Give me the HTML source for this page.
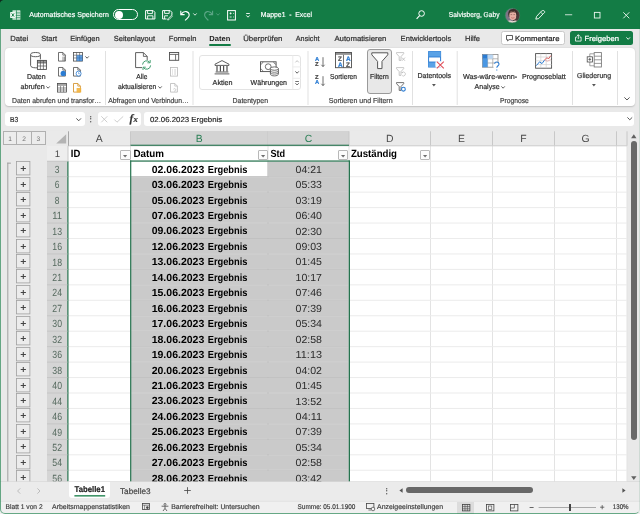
<!DOCTYPE html>
<html lang="de"><head><meta charset="utf-8"><title>Mappe1 - Excel</title>
<style>
html,body{margin:0;padding:0;}
body{width:640px;height:514px;overflow:hidden;background:#e9e9e9;font-family:"Liberation Sans",sans-serif;position:relative;}
#w{position:absolute;left:0;top:0;width:640px;height:514px;overflow:hidden;will-change:transform;}
#w div,#w span,#w svg{position:absolute;box-sizing:border-box;}
#w svg{overflow:visible;}
.x{left:0;top:0;}
.x text{white-space:pre;text-rendering:geometricPrecision;font-family:"Liberation Sans",sans-serif;}
</style></head><body><div id="w">
<div style="left:0px;top:0px;width:640px;height:28.6px;background:#137c45;"></div>
<svg style="left:0px;top:28px" width="640" height="2"><rect x="0.00" y="0.60" width="640" height="0.8" fill="#137c45" opacity=".5"/></svg>
<svg style="left:0px;top:0px;" width="4" height="3" viewBox="0 0 4 3"><path d="M0 0H3.2Q0.6 0.4 0 2.8Z" fill="#10281c"/></svg>
<svg style="left:9.6px;top:9.9px;" width="10.6" height="10" viewBox="0 0 10.6 10"><rect x="2.4" y="0.2" width="8" height="9.6" rx="0.6" fill="#cde7d7"/>
<path d="M2.4 2.9H10.4M2.4 5.4H10.4M2.4 7.7H10.4M6.5 0.2V9.8" stroke="#1d8550" stroke-width="0.7" fill="none"/>
<rect x="0.1" y="2" width="5.6" height="6" rx="0.5" fill="#eaf6ef"/>
<path d="M1.7 3.4L4.1 6.6M4.1 3.4L1.7 6.6" stroke="#137c45" stroke-width="0.95" fill="none"/></svg>
<svg class="x" width="1" height="1"><text x="29.30" y="17.20" font-size="7.2" fill="#fff" stroke="#fff" stroke-width="0.18" textLength="79.50" lengthAdjust="spacingAndGlyphs">Automatisches Speichern</text></svg>
<div style="left:113.2px;top:8.9px;width:25px;height:11.6px;border:1.1px solid #fff;border-radius:6px;"></div>
<div style="left:115.1px;top:10.6px;width:8.2px;height:8.2px;background:#fff;border-radius:50%;"></div>
<svg style="left:145px;top:10px;" width="10.5" height="9.6" viewBox="0 0 10.5 9.6"><path d="M0.6 0.6H8.2L9.9 2.3V9H0.6Z" fill="none" stroke="#fff" stroke-width="1"/>
<path d="M2.6 0.8V3.6H7.4V0.8M2.6 9V5.8H7.9V9" fill="none" stroke="#fff" stroke-width="0.9"/></svg>
<svg style="left:162.4px;top:10px;" width="10.8" height="9.8" viewBox="0 0 10.8 9.8"><path d="M0.6 0.6H8.2L9.9 2.3V5M4.6 9H0.6V0.6" fill="none" stroke="#fff" stroke-width="1"/>
<path d="M2.6 0.8V3.4H7.2V0.8M2.6 9V5.8H6" fill="none" stroke="#fff" stroke-width="0.9"/>
<path d="M9.6 5.2L6 8.8L5.6 10L6.9 9.7L10.4 6.1Z" fill="none" stroke="#fff" stroke-width="0.8"/></svg>
<svg style="left:180px;top:9.5px;" width="10" height="11" viewBox="0 0 10 11"><path d="M0.8 0.8V4.6H4.6" fill="none" stroke="#fff" stroke-width="1.1"/>
<path d="M1 4.4C2.4 2.2 4.4 1.4 6.2 1.6C8.2 1.9 9.2 3.4 9.2 5C9.2 7 7.4 8.4 5 10.4" fill="none" stroke="#fff" stroke-width="1.1"/></svg>
<svg style="left:192.6px;top:13px;" width="4" height="3" viewBox="0 0 4 3"><path d="M0.3 0.4L2 2.2L3.7 0.4" fill="none" stroke="#fff" stroke-width="0.8"/></svg>
<svg style="left:203.8px;top:9.5px;" width="9.4" height="11" viewBox="0 0 9.4 11"><path d="M8.6 0.8V4.6H4.8" fill="none" stroke="#5aa585" stroke-width="1.1"/>
<path d="M8.4 4.4C7 2.2 5 1.4 3.2 1.6C1.4 1.9 0.6 3.4 0.6 5C0.6 7 2.2 8.4 4.4 10.4" fill="none" stroke="#5aa585" stroke-width="1.1"/></svg>
<svg style="left:215.8px;top:13px;" width="4" height="3" viewBox="0 0 4 3"><path d="M0.3 0.4L2 2.2L3.7 0.4" fill="none" stroke="#5aa585" stroke-width="0.8"/></svg>
<svg style="left:227px;top:9.5px;" width="9" height="10.6" viewBox="0 0 9 10.6"><rect x="0.6" y="0.6" width="7.8" height="9.4" fill="none" stroke="#fff" stroke-width="1"/>
<path d="M2.6 3.4H4.6M3.6 2.4V4.4M2.6 7H4.6M6 3.4H6.8M6 7H6.8" stroke="#fff" stroke-width="0.8" fill="none"/></svg>
<svg style="left:246.2px;top:12.8px;" width="4" height="5" viewBox="0 0 4 5"><path d="M0.2 0.5H3.8" stroke="#fff" stroke-width="0.9"/><path d="M0.3 2.4L2 4.2L3.7 2.4" fill="none" stroke="#fff" stroke-width="0.9"/></svg>
<svg class="x" width="1" height="1"><text x="260.80" y="17.20" font-size="7.2" fill="#fff" stroke="#fff" stroke-width="0.18" textLength="51.20" lengthAdjust="spacingAndGlyphs">Mappe1 &nbsp;-&nbsp; Excel</text></svg>
<svg style="left:416.2px;top:10.4px;" width="9" height="9.4" viewBox="0 0 9 9.4"><circle cx="5.6" cy="3.5" r="2.8" fill="none" stroke="#fff" stroke-width="1"/><path d="M3.6 5.6L0.6 8.8" stroke="#fff" stroke-width="1.1"/></svg>
<svg class="x" width="1" height="1"><text x="448.80" y="17.20" font-size="7.2" fill="#fff" stroke="#fff" stroke-width="0.18" textLength="50.70" lengthAdjust="spacingAndGlyphs">Salvisberg, Gaby</text></svg>
<svg style="left:505px;top:7.5px;" width="15" height="15" viewBox="0 0 15 15"><defs><clipPath id="av"><circle cx="7.5" cy="7.5" r="7.3"/></clipPath></defs>
<g clip-path="url(#av)"><rect width="15" height="15" fill="#7d7486"/>
<rect x="8" y="0" width="7" height="15" fill="#4a3a3a"/>
<path d="M3.2 6C3.2 2.6 5.2 1 7.8 1C10.6 1 12.6 2.8 12.4 6.4L11.8 9L3.8 9Z" fill="#3b2c2a"/>
<ellipse cx="7.8" cy="7.6" rx="3.5" ry="4.6" fill="#e6aea4"/>
<path d="M4.6 5.2C5.4 3.4 6.6 3 7.8 3C9.2 3 10.4 3.4 11 5.2C10 4.4 9 4.2 7.8 4.2C6.6 4.2 5.6 4.4 4.6 5.2Z" fill="#5a4038"/>
<path d="M1 15C2 12.4 4.6 12 7.6 13.2C10.6 12 13 12.4 14 15Z" fill="#eadbd4"/>
<path d="M6.2 9.6Q7.8 10.8 9.4 9.6" stroke="#b8605c" stroke-width="0.7" fill="none"/>
<path d="M5.6 6.6H7.2M8.4 6.6H10" stroke="#7a5048" stroke-width="0.6"/></g>
<circle cx="7.5" cy="7.5" r="7.3" fill="none" stroke="#2f8f5f" stroke-width="0.5"/></svg>
<svg style="left:535.4px;top:10px;" width="10.4" height="9.8" viewBox="0 0 10.4 9.8"><path d="M6.4 1.2C7.6 0.2 9.2 0.4 9.6 1.4C10 2.4 9.2 3.2 8.4 3.6L3.6 8.6L0.8 9.2L1.6 6.4Z" fill="none" stroke="#fff" stroke-width="0.9"/>
<path d="M5.6 2.2L8 4.4" stroke="#fff" stroke-width="0.8"/></svg>
<svg style="left:565px;top:14px" width="8" height="2"><rect x="0.00" y="0.40" width="7.2" height="0.8" fill="#eef6f1"/></svg>
<svg style="left:593.8px;top:11.8px;" width="6.4" height="6.4" viewBox="0 0 6.4 6.4"><rect x="0.4" y="0.4" width="5.6" height="5.6" fill="none" stroke="#e3f2ea" stroke-width="0.95"/></svg>
<svg style="left:622.6px;top:11.8px;" width="6.6" height="6.6" viewBox="0 0 6.6 6.6"><path d="M0.3 0.3L6.3 6.3M6.3 0.3L0.3 6.3" stroke="#e3f2ea" stroke-width="0.95"/></svg>
<div style="left:0px;top:29.4px;width:640px;height:18.4px;background:#e9e9e9;"></div>
<svg class="x" width="1" height="1"><text x="10.30" y="41.00" font-size="7.4" fill="#333" stroke="#333" stroke-width="0.22" textLength="17.90" lengthAdjust="spacingAndGlyphs">Datei</text></svg>
<svg class="x" width="1" height="1"><text x="41.20" y="41.00" font-size="7.4" fill="#333" stroke="#333" stroke-width="0.22" textLength="15.80" lengthAdjust="spacingAndGlyphs">Start</text></svg>
<svg class="x" width="1" height="1"><text x="70.20" y="41.00" font-size="7.4" fill="#333" stroke="#333" stroke-width="0.22" textLength="29.40" lengthAdjust="spacingAndGlyphs">Einfügen</text></svg>
<svg class="x" width="1" height="1"><text x="113.80" y="41.00" font-size="7.4" fill="#333" stroke="#333" stroke-width="0.22" textLength="41.20" lengthAdjust="spacingAndGlyphs">Seitenlayout</text></svg>
<svg class="x" width="1" height="1"><text x="168.80" y="41.00" font-size="7.4" fill="#333" stroke="#333" stroke-width="0.22" textLength="27.60" lengthAdjust="spacingAndGlyphs">Formeln</text></svg>
<svg class="x" width="1" height="1"><text x="243.20" y="41.00" font-size="7.4" fill="#333" stroke="#333" stroke-width="0.22" textLength="39.20" lengthAdjust="spacingAndGlyphs">Überprüfen</text></svg>
<svg class="x" width="1" height="1"><text x="295.80" y="41.00" font-size="7.4" fill="#333" stroke="#333" stroke-width="0.22" textLength="23.70" lengthAdjust="spacingAndGlyphs">Ansicht</text></svg>
<svg class="x" width="1" height="1"><text x="334.40" y="41.00" font-size="7.4" fill="#333" stroke="#333" stroke-width="0.22" textLength="51.90" lengthAdjust="spacingAndGlyphs">Automatisieren</text></svg>
<svg class="x" width="1" height="1"><text x="400.60" y="41.00" font-size="7.4" fill="#333" stroke="#333" stroke-width="0.22" textLength="50.70" lengthAdjust="spacingAndGlyphs">Entwicklertools</text></svg>
<svg class="x" width="1" height="1"><text x="465.00" y="41.00" font-size="7.4" fill="#333" stroke="#333" stroke-width="0.22" textLength="15.00" lengthAdjust="spacingAndGlyphs">Hilfe</text></svg>
<svg class="x" width="1" height="1"><text x="209.30" y="41.00" font-size="7.4" fill="#1c1c1c" font-weight="700" textLength="21.00" lengthAdjust="spacingAndGlyphs">Daten</text></svg>
<div style="left:209px;top:44.2px;width:21.8px;height:1.7px;background:#137c45;border-radius:1px;"></div>
<div style="left:500.5px;top:31.2px;width:64.6px;height:13.9px;background:#fff;border:1px solid #c9c9c9;border-radius:2.5px;"></div>
<svg style="left:505.8px;top:35px;" width="7" height="6.6" viewBox="0 0 7 6.6"><path d="M0.5 0.5H6.5V4.6H3L1.6 6V4.6H0.5Z" fill="none" stroke="#333" stroke-width="0.8"/></svg>
<svg class="x" width="1" height="1"><text x="515.00" y="41.10" font-size="7.4" fill="#262626" stroke="#262626" stroke-width="0.22" textLength="44.50" lengthAdjust="spacingAndGlyphs">Kommentare</text></svg>
<div style="left:570px;top:31.2px;width:63.2px;height:13.9px;background:#137c45;border-radius:2.5px;"></div>
<svg style="left:575px;top:34.2px;" width="6.6" height="7.6" viewBox="0 0 6.6 7.6"><path d="M1.8 3.2H0.5V7.1H6.1V3.2H4.8" fill="none" stroke="#fff" stroke-width="0.8"/><path d="M3.3 5V0.8M1.7 2.3L3.3 0.7L4.9 2.3" fill="none" stroke="#fff" stroke-width="0.8"/></svg>
<svg class="x" width="1" height="1"><text x="584.60" y="41.10" font-size="7.4" fill="#fff" stroke="#fff" stroke-width="0.22" textLength="34.40" lengthAdjust="spacingAndGlyphs">Freigeben</text></svg>
<svg style="left:625.6px;top:36.8px;" width="4.4" height="3" viewBox="0 0 4.4 3"><path d="M0.4 0.4L2.2 2.3L4 0.4" fill="none" stroke="#fff" stroke-width="0.9"/></svg>
<div style="left:4.6px;top:47.8px;width:630.6px;height:58.4px;background:#fff;border-radius:4px;box-shadow:0 0.5px 1.5px rgba(0,0,0,.18);"></div>
<svg style="left:29.5px;top:52.4px;" width="17" height="18" viewBox="0 0 17 18"><path d="M0.6 2.6V13.6C0.6 15 3 15.8 5.4 15.8H7.2M10.4 2.6V7.4" fill="none" stroke="#4d4d4d" stroke-width="0.9"/>
<ellipse cx="5.5" cy="2.6" rx="4.9" ry="2.1" fill="#fff" stroke="#4d4d4d" stroke-width="0.9"/>
<rect x="7.4" y="8.4" width="9" height="9" fill="#fff" stroke="#4d4d4d" stroke-width="0.9"/>
<rect x="7.4" y="8.4" width="9" height="2.6" fill="#4d4d4d" opacity=".55"/>
<path d="M7.4 11H16.4M7.4 14H16.4M10.4 8.4V17.4M13.4 8.4V17.4" stroke="#4d4d4d" stroke-width="0.7" fill="none"/></svg>
<svg class="x" width="1" height="1"><text x="27.00" y="79.20" font-size="7.2" fill="#2e2e2e" stroke="#2e2e2e" stroke-width="0.2" textLength="18.60" lengthAdjust="spacingAndGlyphs">Daten</text></svg>
<svg class="x" width="1" height="1"><text x="20.50" y="88.90" font-size="7.2" fill="#2e2e2e" stroke="#2e2e2e" stroke-width="0.2" textLength="24.10" lengthAdjust="spacingAndGlyphs">abrufen</text></svg>
<svg style="left:46.2px;top:85.6px;" width="4.2" height="3" viewBox="0 0 4.2 3"><path d="M0.4 0.4L2.1 2.2L3.8 0.4" fill="none" stroke="#444" stroke-width="0.85"/></svg>
<svg style="left:58px;top:52.4px;" width="8" height="9.6" viewBox="0 0 8 9.6"><path d="M0.5 0.5H4.8L7.4 3.1V9.1H0.5Z" fill="#fff" stroke="#4d4d4d" stroke-width="0.8"/><path d="M4.8 0.5V3.1H7.4" fill="none" stroke="#4d4d4d" stroke-width="0.7"/><path d="M5 4.6V9M6.4 4.6V9" stroke="#4d4d4d" stroke-width="0.6"/></svg>
<svg style="left:58px;top:67.4px;" width="8" height="9.6" viewBox="0 0 8 9.6"><path d="M0.5 0.5H4.8L7.4 3.1V9.1H0.5Z" fill="#fff" stroke="#4d4d4d" stroke-width="0.8"/><path d="M4.8 0.5V3.1H7.4" fill="none" stroke="#4d4d4d" stroke-width="0.7"/><circle cx="5.2" cy="6.4" r="2.6" fill="#2b7cd3"/></svg>
<svg style="left:57.2px;top:82.8px;" width="10" height="9.6" viewBox="0 0 10 9.6"><rect x="0.5" y="0.5" width="9" height="8.6" fill="#fff" stroke="#4d4d4d" stroke-width="0.8"/><rect x="0.5" y="0.5" width="9" height="2.4" fill="#4d4d4d" opacity=".5"/><path d="M0.5 5H9.5M0.5 7H9.5M3.6 2.9V9.1M6.6 2.9V9.1" stroke="#4d4d4d" stroke-width="0.6"/></svg>
<svg style="left:72.6px;top:52.4px;" width="10" height="9.6" viewBox="0 0 10 9.6"><rect x="0.5" y="0.5" width="9" height="8.6" fill="#fff" stroke="#4d4d4d" stroke-width="0.8"/><path d="M0.5 3.2H9.5M0.5 6H9.5M3.6 0.5V9.1M6.6 0.5V9.1" stroke="#4d4d4d" stroke-width="0.6"/><rect x="3.6" y="3.2" width="5.9" height="5.9" fill="#2b7cd3" opacity=".75"/></svg>
<svg style="left:85px;top:55.6px;" width="4.2" height="3" viewBox="0 0 4.2 3"><path d="M0.4 0.4L2.1 2.2L3.8 0.4" fill="none" stroke="#444" stroke-width="0.85"/></svg>
<svg style="left:73.4px;top:67.4px;" width="8" height="9.6" viewBox="0 0 8 9.6"><path d="M0.5 0.5H4.8L7.4 3.1V9.1H0.5Z" fill="#fff" stroke="#4d4d4d" stroke-width="0.8"/><path d="M4.8 0.5V3.1H7.4" fill="none" stroke="#4d4d4d" stroke-width="0.7"/><circle cx="5.6" cy="6.6" r="2.5" fill="#fff" stroke="#2b7cd3" stroke-width="0.8"/><path d="M5.6 5.2V6.7H6.8" stroke="#2b7cd3" stroke-width="0.6" fill="none"/></svg>
<svg style="left:73.4px;top:82.8px;" width="8" height="9.6" viewBox="0 0 8 9.6"><path d="M0.5 0.5H4.8L7.4 3.1V9.1H0.5Z" fill="#fff" stroke="#d08a1a" stroke-width="0.8"/><path d="M4.8 0.5V3.1H7.4" fill="none" stroke="#d08a1a" stroke-width="0.7"/><rect x="3.6" y="5" width="4.6" height="4.4" fill="#f3b23c" opacity=".9"/></svg>
<svg class="x" width="1" height="1"><text x="12.00" y="102.60" font-size="7.2" fill="#444" stroke="#444" stroke-width="0.2" textLength="89.20" lengthAdjust="spacingAndGlyphs">Daten abrufen und transfor…</text></svg>
<svg style="left:105px;top:51px" width="1" height="54"><rect x="0.00" y="0.00" width="1" height="54" fill="#e1e1e1"/></svg>
<svg style="left:135px;top:52px;" width="16.5" height="18.4" viewBox="0 0 16.5 18.4"><path d="M0.6 0.6H8.4L12.2 4.4V8M7 15.6H0.6V0.6" fill="#fff" stroke="#4d4d4d" stroke-width="0.9"/><path d="M8.4 0.6V4.4H12.2" fill="none" stroke="#4d4d4d" stroke-width="0.8"/>
<path d="M7.6 12.6A4 4 0 0 1 14.8 10.4M15.6 13.4A4 4 0 0 1 8.4 15.6" fill="none" stroke="#3a9a6a" stroke-width="1"/>
<path d="M15.2 8V10.8H12.4M8 18V15.2H10.8" fill="none" stroke="#3a9a6a" stroke-width="0.9"/></svg>
<svg class="x" width="1" height="1"><text x="136.30" y="79.20" font-size="7.2" fill="#2e2e2e" stroke="#2e2e2e" stroke-width="0.2" textLength="11.10" lengthAdjust="spacingAndGlyphs">Alle</text></svg>
<svg class="x" width="1" height="1"><text x="118.00" y="88.90" font-size="7.2" fill="#2e2e2e" stroke="#2e2e2e" stroke-width="0.2" textLength="38.20" lengthAdjust="spacingAndGlyphs">aktualisieren</text></svg>
<svg style="left:158px;top:85.6px;" width="4.2" height="3" viewBox="0 0 4.2 3"><path d="M0.4 0.4L2.1 2.2L3.8 0.4" fill="none" stroke="#444" stroke-width="0.85"/></svg>
<svg style="left:168.8px;top:52px;" width="10.2" height="8.8" viewBox="0 0 10.2 8.8"><rect x="0.5" y="0.5" width="9.2" height="7.8" fill="#fff" stroke="#4d4d4d" stroke-width="0.9"/><path d="M0.5 2.4H9.7M6.6 2.4V8.3" stroke="#4d4d4d" stroke-width="0.8"/></svg>
<svg style="left:170px;top:67.4px;" width="8" height="9.6" viewBox="0 0 8 9.6"><rect x="0.5" y="0.5" width="7" height="8.6" fill="#fff" stroke="#b9b9b9" stroke-width="0.8"/><path d="M2 3H3M2 5H3M2 7H3M4.2 3H6M4.2 5H6M4.2 7H6" stroke="#b9b9b9" stroke-width="0.7"/></svg>
<svg style="left:170.4px;top:82.8px;" width="8" height="9.6" viewBox="0 0 8 9.6"><path d="M0.5 0.5H4.8L7.4 3.1V9.1H0.5Z" fill="#fff" stroke="#b9b9b9" stroke-width="0.8"/><path d="M4.8 0.5V3.1H7.4" fill="none" stroke="#b9b9b9" stroke-width="0.7"/><path d="M3.4 6.2C4.4 5.2 5.6 5.6 5.8 6.6C6 7.6 5 8.4 4 8" stroke="#b9b9b9" stroke-width="0.7" fill="none"/></svg>
<svg class="x" width="1" height="1"><text x="108.20" y="102.60" font-size="7.2" fill="#444" stroke="#444" stroke-width="0.2" textLength="80.60" lengthAdjust="spacingAndGlyphs">Abfragen und Verbindun…</text></svg>
<svg style="left:192px;top:51px" width="2" height="54"><rect x="0.50" y="0.00" width="1" height="54" fill="#e1e1e1"/></svg>
<div style="left:198.8px;top:55px;width:102.6px;height:34.6px;background:#fff;border:1px solid #e3e3e3;border-radius:3px;"></div>
<svg style="left:292px;top:55px" width="2" height="35"><rect x="0.30" y="0.50" width="1" height="33.6" fill="#ececec"/></svg>
<svg style="left:292px;top:66px" width="9" height="2"><rect x="0.30" y="0.40" width="8.6" height="1" fill="#ececec"/></svg>
<svg style="left:292px;top:77px" width="9" height="2"><rect x="0.30" y="0.80" width="8.6" height="1" fill="#ececec"/></svg>
<svg style="left:294.7px;top:59.6px;" width="4.2" height="3" viewBox="0 0 4.2 3"><path d="M0.4 2.4L2.1 0.6L3.8 2.4" fill="none" stroke="#b9b9b9" stroke-width="0.85"/></svg>
<svg style="left:294.7px;top:71px;" width="4.2" height="3" viewBox="0 0 4.2 3"><path d="M0.4 0.4L2.1 2.2L3.8 0.4" fill="none" stroke="#444" stroke-width="0.85"/></svg>
<svg style="left:294.7px;top:81px;" width="4.2" height="5" viewBox="0 0 4.2 5"><path d="M0.3 0.5H3.9" stroke="#4d4d4d" stroke-width="0.8"/><path d="M0.4 2.2L2.1 4L3.8 2.2" fill="none" stroke="#4d4d4d" stroke-width="0.85"/></svg>
<svg style="left:214.4px;top:60px;" width="16" height="14.6" viewBox="0 0 16 14.6"><path d="M8 0.6L15 4.2V5.4H1V4.2Z" fill="#fff" stroke="#4d4d4d" stroke-width="0.9"/>
<path d="M3 6V11.4M6.4 6V11.4M9.6 6V11.4M13 6V11.4" stroke="#4d4d4d" stroke-width="1.2"/>
<path d="M1.6 12H14.4M0.6 13.9H15.4" stroke="#4d4d4d" stroke-width="0.9"/></svg>
<svg class="x" width="1" height="1"><text x="212.60" y="85.00" font-size="7.2" fill="#2e2e2e" stroke="#2e2e2e" stroke-width="0.2" textLength="20.00" lengthAdjust="spacingAndGlyphs">Aktien</text></svg>
<svg style="left:260px;top:61px;" width="19" height="15.4" viewBox="0 0 19 15.4"><rect x="0.5" y="0.8" width="15.6" height="9.8" fill="#fff" stroke="#4d4d4d" stroke-width="0.9"/>
<circle cx="8.2" cy="5.7" r="2.9" fill="none" stroke="#4d4d4d" stroke-width="0.8"/>
<path d="M0.5 3.2C1.8 3.2 2.8 2.2 2.8 0.8M16.1 3.2C14.8 3.2 13.8 2.2 13.8 0.8M0.5 8.2C1.8 8.2 2.8 9.2 2.8 10.6" fill="none" stroke="#4d4d4d" stroke-width="0.7"/>
<path d="M10.4 7.6V13C10.4 14.2 12.2 14.9 14.4 14.9C16.6 14.9 18.4 14.2 18.4 13V7.6" fill="#fff" stroke="#4d4d4d" stroke-width="0.8"/>
<ellipse cx="14.4" cy="7.6" rx="4" ry="1.7" fill="#fff" stroke="#4d4d4d" stroke-width="0.8"/>
<path d="M10.4 9.6C10.4 10.6 12.2 11.3 14.4 11.3C16.6 11.3 18.4 10.6 18.4 9.6M10.4 11.4C10.4 12.4 12.2 13.1 14.4 13.1C16.6 13.1 18.4 12.4 18.4 11.4" fill="none" stroke="#4d4d4d" stroke-width="0.7"/></svg>
<svg class="x" width="1" height="1"><text x="250.60" y="85.00" font-size="7.2" fill="#2e2e2e" stroke="#2e2e2e" stroke-width="0.2" textLength="36.40" lengthAdjust="spacingAndGlyphs">Währungen</text></svg>
<svg class="x" width="1" height="1"><text x="232.60" y="102.60" font-size="7.2" fill="#444" stroke="#444" stroke-width="0.2" textLength="35.40" lengthAdjust="spacingAndGlyphs">Datentypen</text></svg>
<svg style="left:307px;top:51px" width="2" height="54"><rect x="0.50" y="0.00" width="1" height="54" fill="#e1e1e1"/></svg>
<svg class="x" width="1" height="1"><text x="315.00" y="61.00" font-size="5.8" fill="#2b7cd3" font-weight="700" stroke="#2b7cd3" stroke-width="0.2">A</text></svg>
<svg class="x" width="1" height="1"><text x="315.00" y="66.00" font-size="5.8" fill="#444" font-weight="700" stroke="#444" stroke-width="0.2">Z</text></svg>
<svg class="x" width="1" height="1"><text x="315.00" y="79.40" font-size="5.8" fill="#444" font-weight="700" stroke="#444" stroke-width="0.2">Z</text></svg>
<svg class="x" width="1" height="1"><text x="315.00" y="84.40" font-size="5.8" fill="#2b7cd3" font-weight="700" stroke="#2b7cd3" stroke-width="0.2">A</text></svg>
<svg style="left:321px;top:56.6px;" width="4" height="10.4" viewBox="0 0 4 10.4"><path d="M2 0.2V9.6M0.4 7.8L2 9.6L3.6 7.8" fill="none" stroke="#4d4d4d" stroke-width="0.8"/></svg>
<svg style="left:321px;top:76px;" width="4" height="10.4" viewBox="0 0 4 10.4"><path d="M2 0.2V9.6M0.4 7.8L2 9.6L3.6 7.8" fill="none" stroke="#4d4d4d" stroke-width="0.8"/></svg>
<svg style="left:335.4px;top:52px;" width="17" height="16.4" viewBox="0 0 17 16.4"><rect x="0.5" y="0.5" width="16" height="15.2" fill="#fff" stroke="#4d4d4d" stroke-width="0.9"/>
<rect x="0.5" y="0.5" width="16" height="2.4" fill="#4d4d4d" opacity=".6"/><path d="M8.5 2.9V15.7" stroke="#4d4d4d" stroke-width="0.8"/></svg>
<svg class="x" width="1" height="1"><text x="337.90" y="61.00" font-size="6.4" fill="#555" font-weight="700" stroke="#555" stroke-width="0.2">Z</text></svg>
<svg class="x" width="1" height="1"><text x="337.90" y="67.20" font-size="6.4" fill="#2b7cd3" font-weight="700" stroke="#2b7cd3" stroke-width="0.2">A</text></svg>
<svg class="x" width="1" height="1"><text x="346.00" y="61.00" font-size="6.4" fill="#2b7cd3" font-weight="700" stroke="#2b7cd3" stroke-width="0.2">A</text></svg>
<svg class="x" width="1" height="1"><text x="346.00" y="67.20" font-size="6.4" fill="#555" font-weight="700" stroke="#555" stroke-width="0.2">Z</text></svg>
<svg class="x" width="1" height="1"><text x="330.00" y="79.20" font-size="7.2" fill="#2e2e2e" stroke="#2e2e2e" stroke-width="0.2" textLength="27.00" lengthAdjust="spacingAndGlyphs">Sortieren</text></svg>
<div style="left:367.4px;top:49.4px;width:24.8px;height:45px;background:#e8e8e8;border:1px solid #9a9a9a;border-radius:3px;"></div>
<svg style="left:370.8px;top:52.4px;" width="17.6" height="17.4" viewBox="0 0 17.6 17.4"><path d="M0.8 0.8H16.8V2.8L11 9.4V16.6H6.6V9.4L0.8 2.8Z" fill="#fdfdfd" stroke="#555" stroke-width="1"/></svg>
<svg class="x" width="1" height="1"><text x="370.00" y="79.20" font-size="7.2" fill="#2e2e2e" stroke="#2e2e2e" stroke-width="0.2" textLength="18.80" lengthAdjust="spacingAndGlyphs">Filtern</text></svg>
<svg style="left:395.8px;top:52.4px;" width="10" height="9.8" viewBox="0 0 10 9.8"><path d="M0.5 0.6H7.7V1.6L5 4.6V8.4H3.2V4.6L0.5 1.6Z" fill="#fff" stroke="#b9b9b9" stroke-width="0.8"/><path d="M6 5.6L9 8.8M9 5.6L6 8.8" stroke="#b9b9b9" stroke-width="0.8"/></svg>
<svg style="left:395.8px;top:67.2px;" width="10" height="9.8" viewBox="0 0 10 9.8"><path d="M0.5 0.6H7.7V1.6L5 4.6V8.4H3.2V4.6L0.5 1.6Z" fill="#fff" stroke="#b9b9b9" stroke-width="0.8"/><path d="M6.2 8.6A2 2 0 1 0 6 5.6M5.4 4.8L6 5.8L7 5.4" stroke="#b9b9b9" stroke-width="0.7" fill="none"/></svg>
<svg style="left:395.8px;top:82.2px;" width="10" height="9.8" viewBox="0 0 10 9.8"><path d="M0.5 0.6H7.7V1.6L5 4.6V8.4H3.2V4.6L0.5 1.6Z" fill="#fff" stroke="#4d4d4d" stroke-width="0.8"/><circle cx="7.4" cy="7.2" r="1.9" fill="#fff" stroke="#2b7cd3" stroke-width="1.1"/></svg>
<svg class="x" width="1" height="1"><text x="328.80" y="102.60" font-size="7.2" fill="#444" stroke="#444" stroke-width="0.2" textLength="63.80" lengthAdjust="spacingAndGlyphs">Sortieren und Filtern</text></svg>
<svg style="left:412px;top:51px" width="1" height="54"><rect x="0.00" y="0.00" width="1" height="54" fill="#e1e1e1"/></svg>
<svg style="left:428px;top:51px;" width="17" height="18" viewBox="0 0 17 18"><rect x="0.6" y="0.6" width="12" height="15.4" fill="#fff" stroke="#2b7cd3" stroke-width="1"/>
<rect x="0.6" y="0.6" width="12" height="5.4" fill="#5aa2e6"/><rect x="0.6" y="11" width="7" height="5" fill="#5aa2e6"/><path d="M0.6 6H12.6M0.6 11H12.6" stroke="#2b7cd3" stroke-width="0.9"/>
<rect x="7.6" y="10.2" width="6" height="6.4" fill="#fff"/>
<path d="M8.8 10.6L15.8 17.4M15.8 10.6L8.8 17.4" stroke="#e0505a" stroke-width="1.1"/></svg>
<svg class="x" width="1" height="1"><text x="417.50" y="77.80" font-size="7.2" fill="#2e2e2e" stroke="#2e2e2e" stroke-width="0.2" textLength="33.50" lengthAdjust="spacingAndGlyphs">Datentools</text></svg>
<svg style="left:432.2px;top:84.2px;" width="3.8" height="2.4" viewBox="0 0 3.8 2.4"><path d="M0 0H3.8L1.9 2.4Z" fill="#555"/></svg>
<svg style="left:456px;top:51px" width="2" height="54"><rect x="0.70" y="0.00" width="1" height="54" fill="#e1e1e1"/></svg>
<svg style="left:482.3px;top:53.8px;" width="18.4" height="17.4" viewBox="0 0 18.4 17.4"><rect x="0.6" y="0.6" width="15.4" height="12.6" fill="#fff" stroke="#8a8a8a" stroke-width="0.8"/>
<path d="M0.6 4.8H16M0.6 9H16M5.6 0.6V13.2M10.8 0.6V13.2" stroke="#9a9a9a" stroke-width="0.7"/>
<rect x="0.6" y="0.6" width="5" height="4.2" fill="#2b7cd3"/><rect x="0.6" y="4.8" width="5" height="4.2" fill="#4a97e3"/><rect x="0.6" y="9" width="5" height="4.2" fill="#4a97e3"/><rect x="5.6" y="0.6" width="5.2" height="4.2" fill="#b9d6f3"/>
<circle cx="14.8" cy="12.4" r="3.4" fill="#fff"/>
<path d="M12.6 9.8C12.8 7.6 16.6 7.4 17 9.8C17.3 11.6 14.8 11.8 14.8 13.8M14.8 15.4V16.6" fill="none" stroke="#2b7cd3" stroke-width="1.1"/></svg>
<svg class="x" width="1" height="1"><text x="463.00" y="79.20" font-size="7.2" fill="#2e2e2e" stroke="#2e2e2e" stroke-width="0.2" textLength="54.20" lengthAdjust="spacingAndGlyphs">Was-wäre-wenn-</text></svg>
<svg class="x" width="1" height="1"><text x="474.60" y="88.90" font-size="7.2" fill="#2e2e2e" stroke="#2e2e2e" stroke-width="0.2" textLength="25.00" lengthAdjust="spacingAndGlyphs">Analyse</text></svg>
<svg style="left:501.2px;top:85.6px;" width="4.2" height="3" viewBox="0 0 4.2 3"><path d="M0.4 0.4L2.1 2.2L3.8 0.4" fill="none" stroke="#444" stroke-width="0.85"/></svg>
<svg style="left:535px;top:52.8px;" width="17.4" height="16" viewBox="0 0 17.4 16"><rect x="0.6" y="0.6" width="16" height="14.6" fill="#fff" stroke="#4d4d4d" stroke-width="0.9"/>
<path d="M0.6 4H16.6M0.6 7.8H16.6M0.6 11.6H16.6M5.8 0.6V15.2M11.2 0.6V15.2" stroke="#c9c9c9" stroke-width="0.6"/>
<path d="M1.4 12.6L4.6 8.8L7 10.6L9.6 7" fill="none" stroke="#2b7cd3" stroke-width="1"/>
<path d="M9.6 7L12 4.6L13.4 6L15.8 2.6" fill="none" stroke="#d65a5a" stroke-width="1"/><path d="M9.6 7L12.4 8.2L15.8 6.6" fill="none" stroke="#e9a0a0" stroke-width="0.7"/></svg>
<svg class="x" width="1" height="1"><text x="522.00" y="79.20" font-size="7.2" fill="#2e2e2e" stroke="#2e2e2e" stroke-width="0.2" textLength="43.60" lengthAdjust="spacingAndGlyphs">Prognoseblatt</text></svg>
<svg class="x" width="1" height="1"><text x="500.00" y="102.60" font-size="7.2" fill="#444" stroke="#444" stroke-width="0.2" textLength="28.80" lengthAdjust="spacingAndGlyphs">Prognose</text></svg>
<svg style="left:572px;top:51px" width="1" height="54"><rect x="0.00" y="0.00" width="1" height="54" fill="#e1e1e1"/></svg>
<svg style="left:586px;top:51.6px;" width="17" height="15.6" viewBox="0 0 17 15.6"><path d="M8.2 1.8H3.8V13.8H8.2" fill="none" stroke="#8a8a8a" stroke-width="0.8"/>
<rect x="8.2" y="0.6" width="7.2" height="14.4" fill="#fff" stroke="#777" stroke-width="0.85"/>
<path d="M8.2 4.2H15.4M8.2 7.8H15.4M8.2 11.4H15.4" stroke="#777" stroke-width="0.75"/>
<rect x="1.2" y="4.8" width="5.2" height="5.2" fill="#fff" stroke="#4d4d4d" stroke-width="0.8"/><path d="M2.4 7.4H5.2M3.8 6V8.8" stroke="#4d4d4d" stroke-width="0.8"/></svg>
<svg class="x" width="1" height="1"><text x="577.00" y="77.80" font-size="7.2" fill="#2e2e2e" stroke="#2e2e2e" stroke-width="0.2" textLength="34.00" lengthAdjust="spacingAndGlyphs">Gliederung</text></svg>
<svg style="left:592px;top:84.2px;" width="3.8" height="2.4" viewBox="0 0 3.8 2.4"><path d="M0 0H3.8L1.9 2.4Z" fill="#555"/></svg>
<svg style="left:617px;top:51px" width="1" height="54"><rect x="0.00" y="0.00" width="1" height="54" fill="#e1e1e1"/></svg>
<svg style="left:623.6px;top:97px;" width="6" height="3.6" viewBox="0 0 6 3.6"><path d="M0.4 0.4L3 3L5.6 0.4" fill="none" stroke="#444" stroke-width="0.9"/></svg>
<div style="left:4.8px;top:111.8px;width:80px;height:14.4px;background:#fff;border-radius:3px;"></div>
<svg class="x" width="1" height="1"><text x="10.00" y="122.00" font-size="7.3" fill="#222" stroke="#222" stroke-width="0.15" textLength="8.20" lengthAdjust="spacingAndGlyphs">B3</text></svg>
<svg style="left:76.2px;top:117.6px;" width="5.4" height="3.4" viewBox="0 0 5.4 3.4"><path d="M0.4 0.4L2.7 2.8L5 0.4" fill="none" stroke="#444" stroke-width="0.9"/></svg>
<svg style="left:90.4px;top:115.6px;" width="1.4" height="1.4" viewBox="0 0 1.4 1.4"><circle cx="0.7" cy="0.7" r="0.7" fill="#555"/></svg>
<svg style="left:90.4px;top:118.2px;" width="1.4" height="1.4" viewBox="0 0 1.4 1.4"><circle cx="0.7" cy="0.7" r="0.7" fill="#555"/></svg>
<svg style="left:90.4px;top:120.8px;" width="1.4" height="1.4" viewBox="0 0 1.4 1.4"><circle cx="0.7" cy="0.7" r="0.7" fill="#555"/></svg>
<div style="left:98px;top:111.8px;width:42.6px;height:14.4px;background:#fff;border-radius:3px;"></div>
<svg style="left:101.4px;top:115.8px;" width="6.6" height="6.6" viewBox="0 0 6.6 6.6"><path d="M0.3 0.3L6.3 6.3M6.3 0.3L0.3 6.3" stroke="#c2c2c2" stroke-width="0.8"/></svg>
<svg style="left:114px;top:115.8px;" width="9.6" height="6.6" viewBox="0 0 9.6 6.6"><path d="M0.4 3.6L3 6.2L9.2 0.4" fill="none" stroke="#c2c2c2" stroke-width="0.8"/></svg>
<svg class="x" width="1" height="1"><text x="129.60" y="122.40" font-size="11.4" fill="#333" font-weight="700" stroke="#333" stroke-width="0.15" font-style="italic" style="font-family:'Liberation Serif',serif">f</text></svg>
<svg class="x" width="1" height="1"><text x="133.60" y="122.00" font-size="8.6" fill="#333" font-weight="700" stroke="#333" stroke-width="0.15" font-style="italic" style="font-family:'Liberation Serif',serif">x</text></svg>
<div style="left:143.6px;top:111.6px;width:490.8px;height:14.6px;background:#fff;border-radius:3px;"></div>
<svg class="x" width="1" height="1"><text x="150.00" y="122.00" font-size="7.3" fill="#222" stroke="#222" stroke-width="0.15" textLength="72.20" lengthAdjust="spacingAndGlyphs">02.06.2023 Ergebnis</text></svg>
<svg style="left:626.8px;top:117.2px;" width="5.6" height="3.4" viewBox="0 0 5.6 3.4"><path d="M0.4 0.4L2.8 2.8L5.2 0.4" fill="none" stroke="#444" stroke-width="0.9"/></svg>
<div id="grid" style="left:0;top:127px;width:640px;height:354.6px;background:#e9e9e9;overflow:hidden;">
<div style="left:68px;top:18.8px;width:559px;height:335.8px;background:#fff;"></div>
<div style="left:130.5px;top:34.25px;width:218.5px;height:320.35px;background:#cacaca;"></div>
<div style="left:130.5px;top:34.25px;width:137.5px;height:15.45px;background:#fff;"></div>
<svg style="left:130px;top:18px" width="1" height="337"><rect x="0.00" y="0.80" width="1" height="335.8" fill="#e3e3e3"/></svg>
<svg style="left:267px;top:18px" width="2" height="337"><rect x="0.50" y="0.80" width="1" height="335.8" fill="#e3e3e3"/></svg>
<svg style="left:348px;top:18px" width="2" height="337"><rect x="0.50" y="0.80" width="1" height="335.8" fill="#e3e3e3"/></svg>
<svg style="left:430px;top:18px" width="1" height="337"><rect x="0.00" y="0.80" width="1" height="335.8" fill="#e3e3e3"/></svg>
<svg style="left:492px;top:18px" width="1" height="337"><rect x="0.00" y="0.80" width="1" height="335.8" fill="#e3e3e3"/></svg>
<svg style="left:554px;top:18px" width="1" height="337"><rect x="0.00" y="0.80" width="1" height="335.8" fill="#e3e3e3"/></svg>
<svg style="left:616px;top:18px" width="1" height="337"><rect x="0.00" y="0.80" width="1" height="335.8" fill="#e3e3e3"/></svg>
<svg style="left:626px;top:18px" width="2" height="337"><rect x="0.50" y="0.80" width="1" height="335.8" fill="#e3e3e3"/></svg>
<svg style="left:68px;top:33px" width="559" height="2"><rect x="0.00" y="0.75" width="559" height="1" fill="#ececec"/></svg>
<svg style="left:68px;top:49px" width="559" height="2"><rect x="0.00" y="0.20" width="559" height="1" fill="#ececec"/></svg>
<svg style="left:68px;top:64px" width="559" height="2"><rect x="0.00" y="0.65" width="559" height="1" fill="#ececec"/></svg>
<svg style="left:68px;top:80px" width="559" height="2"><rect x="0.00" y="0.10" width="559" height="1" fill="#ececec"/></svg>
<svg style="left:68px;top:95px" width="559" height="2"><rect x="0.00" y="0.55" width="559" height="1" fill="#ececec"/></svg>
<svg style="left:68px;top:111px" width="559" height="1"><rect x="0.00" y="0.00" width="559" height="1" fill="#ececec"/></svg>
<svg style="left:68px;top:126px" width="559" height="2"><rect x="0.00" y="0.45" width="559" height="1" fill="#ececec"/></svg>
<svg style="left:68px;top:141px" width="559" height="2"><rect x="0.00" y="0.90" width="559" height="1" fill="#ececec"/></svg>
<svg style="left:68px;top:157px" width="559" height="2"><rect x="0.00" y="0.35" width="559" height="1" fill="#ececec"/></svg>
<svg style="left:68px;top:172px" width="559" height="2"><rect x="0.00" y="0.80" width="559" height="1" fill="#ececec"/></svg>
<svg style="left:68px;top:188px" width="559" height="2"><rect x="0.00" y="0.25" width="559" height="1" fill="#ececec"/></svg>
<svg style="left:68px;top:203px" width="559" height="2"><rect x="0.00" y="0.70" width="559" height="1" fill="#ececec"/></svg>
<svg style="left:68px;top:219px" width="559" height="2"><rect x="0.00" y="0.15" width="559" height="1" fill="#ececec"/></svg>
<svg style="left:68px;top:234px" width="559" height="2"><rect x="0.00" y="0.60" width="559" height="1" fill="#ececec"/></svg>
<svg style="left:68px;top:250px" width="559" height="2"><rect x="0.00" y="0.05" width="559" height="1" fill="#ececec"/></svg>
<svg style="left:68px;top:265px" width="559" height="2"><rect x="0.00" y="0.50" width="559" height="1" fill="#ececec"/></svg>
<svg style="left:68px;top:280px" width="559" height="2"><rect x="0.00" y="0.95" width="559" height="1" fill="#ececec"/></svg>
<svg style="left:68px;top:296px" width="559" height="2"><rect x="0.00" y="0.40" width="559" height="1" fill="#ececec"/></svg>
<svg style="left:68px;top:311px" width="559" height="2"><rect x="0.00" y="0.85" width="559" height="1" fill="#ececec"/></svg>
<svg style="left:68px;top:327px" width="559" height="2"><rect x="0.00" y="0.30" width="559" height="1" fill="#ececec"/></svg>
<svg style="left:68px;top:342px" width="559" height="2"><rect x="0.00" y="0.75" width="559" height="1" fill="#ececec"/></svg>
<svg style="left:68px;top:358px" width="559" height="2"><rect x="0.00" y="0.20" width="559" height="1" fill="#ececec"/></svg>
<svg style="left:131px;top:49px" width="218" height="2"><rect x="0.00" y="0.20" width="217.5" height="1" fill="#c1c1c1"/></svg>
<svg style="left:131px;top:64px" width="218" height="2"><rect x="0.00" y="0.65" width="217.5" height="1" fill="#c1c1c1"/></svg>
<svg style="left:131px;top:80px" width="218" height="2"><rect x="0.00" y="0.10" width="217.5" height="1" fill="#c1c1c1"/></svg>
<svg style="left:131px;top:95px" width="218" height="2"><rect x="0.00" y="0.55" width="217.5" height="1" fill="#c1c1c1"/></svg>
<svg style="left:131px;top:111px" width="218" height="1"><rect x="0.00" y="0.00" width="217.5" height="1" fill="#c1c1c1"/></svg>
<svg style="left:131px;top:126px" width="218" height="2"><rect x="0.00" y="0.45" width="217.5" height="1" fill="#c1c1c1"/></svg>
<svg style="left:131px;top:141px" width="218" height="2"><rect x="0.00" y="0.90" width="217.5" height="1" fill="#c1c1c1"/></svg>
<svg style="left:131px;top:157px" width="218" height="2"><rect x="0.00" y="0.35" width="217.5" height="1" fill="#c1c1c1"/></svg>
<svg style="left:131px;top:172px" width="218" height="2"><rect x="0.00" y="0.80" width="217.5" height="1" fill="#c1c1c1"/></svg>
<svg style="left:131px;top:188px" width="218" height="2"><rect x="0.00" y="0.25" width="217.5" height="1" fill="#c1c1c1"/></svg>
<svg style="left:131px;top:203px" width="218" height="2"><rect x="0.00" y="0.70" width="217.5" height="1" fill="#c1c1c1"/></svg>
<svg style="left:131px;top:219px" width="218" height="2"><rect x="0.00" y="0.15" width="217.5" height="1" fill="#c1c1c1"/></svg>
<svg style="left:131px;top:234px" width="218" height="2"><rect x="0.00" y="0.60" width="217.5" height="1" fill="#c1c1c1"/></svg>
<svg style="left:131px;top:250px" width="218" height="2"><rect x="0.00" y="0.05" width="217.5" height="1" fill="#c1c1c1"/></svg>
<svg style="left:131px;top:265px" width="218" height="2"><rect x="0.00" y="0.50" width="217.5" height="1" fill="#c1c1c1"/></svg>
<svg style="left:131px;top:280px" width="218" height="2"><rect x="0.00" y="0.95" width="217.5" height="1" fill="#c1c1c1"/></svg>
<svg style="left:131px;top:296px" width="218" height="2"><rect x="0.00" y="0.40" width="217.5" height="1" fill="#c1c1c1"/></svg>
<svg style="left:131px;top:311px" width="218" height="2"><rect x="0.00" y="0.85" width="217.5" height="1" fill="#c1c1c1"/></svg>
<svg style="left:131px;top:327px" width="218" height="2"><rect x="0.00" y="0.30" width="217.5" height="1" fill="#c1c1c1"/></svg>
<svg style="left:131px;top:342px" width="218" height="2"><rect x="0.00" y="0.75" width="217.5" height="1" fill="#c1c1c1"/></svg>
<svg style="left:131px;top:358px" width="218" height="2"><rect x="0.00" y="0.20" width="217.5" height="1" fill="#c1c1c1"/></svg>
<svg style="left:267px;top:34px" width="2" height="321"><rect x="0.50" y="0.25" width="1" height="320.35" fill="#bebebe"/></svg>
<div style="left:47px;top:4.3px;width:580px;height:14.5px;background:#eaeaea;"></div>
<svg style="left:130px;top:4px" width="1" height="15"><rect x="0.00" y="0.30" width="1" height="14.5" fill="#c8c8c8"/></svg>
<svg class="x" width="1" height="1"><text x="99.25" y="14.70" font-size="10.4" fill="#4a4a4a" text-anchor="middle">A</text></svg>
<div style="left:130.5px;top:4.3px;width:137.5px;height:14.5px;background:#d3d3d3;"></div>
<svg style="left:267px;top:4px" width="2" height="15"><rect x="0.50" y="0.30" width="1" height="14.5" fill="#c8c8c8"/></svg>
<svg class="x" width="1" height="1"><text x="199.25" y="14.70" font-size="10.4" fill="#2a7f55" text-anchor="middle">B</text></svg>
<div style="left:268px;top:4.3px;width:81px;height:14.5px;background:#d3d3d3;"></div>
<svg style="left:348px;top:4px" width="2" height="15"><rect x="0.50" y="0.30" width="1" height="14.5" fill="#c8c8c8"/></svg>
<svg class="x" width="1" height="1"><text x="308.50" y="14.70" font-size="10.4" fill="#2a7f55" text-anchor="middle">C</text></svg>
<svg style="left:430px;top:4px" width="1" height="15"><rect x="0.00" y="0.30" width="1" height="14.5" fill="#c8c8c8"/></svg>
<svg class="x" width="1" height="1"><text x="389.75" y="14.70" font-size="10.4" fill="#4a4a4a" text-anchor="middle">D</text></svg>
<svg style="left:492px;top:4px" width="1" height="15"><rect x="0.00" y="0.30" width="1" height="14.5" fill="#c8c8c8"/></svg>
<svg class="x" width="1" height="1"><text x="461.50" y="14.70" font-size="10.4" fill="#4a4a4a" text-anchor="middle">E</text></svg>
<svg style="left:554px;top:4px" width="1" height="15"><rect x="0.00" y="0.30" width="1" height="14.5" fill="#c8c8c8"/></svg>
<svg class="x" width="1" height="1"><text x="523.50" y="14.70" font-size="10.4" fill="#4a4a4a" text-anchor="middle">F</text></svg>
<svg style="left:616px;top:4px" width="1" height="15"><rect x="0.00" y="0.30" width="1" height="14.5" fill="#c8c8c8"/></svg>
<svg class="x" width="1" height="1"><text x="585.50" y="14.70" font-size="10.4" fill="#4a4a4a" text-anchor="middle">G</text></svg>
<svg style="left:626px;top:4px" width="2" height="15"><rect x="0.50" y="0.30" width="1" height="14.5" fill="#c8c8c8"/></svg>
<svg style="left:47px;top:18px" width="580" height="2"><rect x="0.00" y="0.30" width="580" height="1" fill="#cdcdcd"/></svg>
<svg style="left:130px;top:17px" width="219" height="2"><rect x="0.50" y="0.70" width="218.5" height="1.1" fill="#26744f"/></svg>
<div style="left:47px;top:4.3px;width:21px;height:14.5px;background:#eaeaea;"></div>
<svg style="left:68px;top:4px" width="1" height="15"><rect x="0.00" y="0.30" width="1" height="14.5" fill="#a8a8a8"/></svg>
<svg style="left:56px;top:6.8px;" width="10.4" height="9.8" viewBox="0 0 10.4 9.8"><path d="M10.2 0.2V9.6H0.2Z" fill="#b4b4b4"/></svg>
<div style="left:47px;top:18.8px;width:21px;height:335.8px;background:#eeeeee;"></div>
<div style="left:47px;top:34.25px;width:21px;height:320.35px;background:#d5d5d5;"></div>
<svg style="left:67px;top:34px" width="2" height="321"><rect x="0.30" y="0.25" width="1.2" height="320.35" fill="#26744f"/></svg>
<svg style="left:67px;top:18px" width="2" height="17"><rect x="0.50" y="0.80" width="1" height="15.45" fill="#c8c8c8"/></svg>
<svg style="left:47px;top:33px" width="21" height="2"><rect x="0.00" y="0.75" width="20.4" height="1" fill="#c6c6c6"/></svg>
<svg style="left:47px;top:49px" width="21" height="2"><rect x="0.00" y="0.20" width="20.4" height="1" fill="#c6c6c6"/></svg>
<svg style="left:47px;top:64px" width="21" height="2"><rect x="0.00" y="0.65" width="20.4" height="1" fill="#c6c6c6"/></svg>
<svg style="left:47px;top:80px" width="21" height="2"><rect x="0.00" y="0.10" width="20.4" height="1" fill="#c6c6c6"/></svg>
<svg style="left:47px;top:95px" width="21" height="2"><rect x="0.00" y="0.55" width="20.4" height="1" fill="#c6c6c6"/></svg>
<svg style="left:47px;top:111px" width="21" height="1"><rect x="0.00" y="0.00" width="20.4" height="1" fill="#c6c6c6"/></svg>
<svg style="left:47px;top:126px" width="21" height="2"><rect x="0.00" y="0.45" width="20.4" height="1" fill="#c6c6c6"/></svg>
<svg style="left:47px;top:141px" width="21" height="2"><rect x="0.00" y="0.90" width="20.4" height="1" fill="#c6c6c6"/></svg>
<svg style="left:47px;top:157px" width="21" height="2"><rect x="0.00" y="0.35" width="20.4" height="1" fill="#c6c6c6"/></svg>
<svg style="left:47px;top:172px" width="21" height="2"><rect x="0.00" y="0.80" width="20.4" height="1" fill="#c6c6c6"/></svg>
<svg style="left:47px;top:188px" width="21" height="2"><rect x="0.00" y="0.25" width="20.4" height="1" fill="#c6c6c6"/></svg>
<svg style="left:47px;top:203px" width="21" height="2"><rect x="0.00" y="0.70" width="20.4" height="1" fill="#c6c6c6"/></svg>
<svg style="left:47px;top:219px" width="21" height="2"><rect x="0.00" y="0.15" width="20.4" height="1" fill="#c6c6c6"/></svg>
<svg style="left:47px;top:234px" width="21" height="2"><rect x="0.00" y="0.60" width="20.4" height="1" fill="#c6c6c6"/></svg>
<svg style="left:47px;top:250px" width="21" height="2"><rect x="0.00" y="0.05" width="20.4" height="1" fill="#c6c6c6"/></svg>
<svg style="left:47px;top:265px" width="21" height="2"><rect x="0.00" y="0.50" width="20.4" height="1" fill="#c6c6c6"/></svg>
<svg style="left:47px;top:280px" width="21" height="2"><rect x="0.00" y="0.95" width="20.4" height="1" fill="#c6c6c6"/></svg>
<svg style="left:47px;top:296px" width="21" height="2"><rect x="0.00" y="0.40" width="20.4" height="1" fill="#c6c6c6"/></svg>
<svg style="left:47px;top:311px" width="21" height="2"><rect x="0.00" y="0.85" width="20.4" height="1" fill="#c6c6c6"/></svg>
<svg style="left:47px;top:327px" width="21" height="2"><rect x="0.00" y="0.30" width="20.4" height="1" fill="#c6c6c6"/></svg>
<svg style="left:47px;top:342px" width="21" height="2"><rect x="0.00" y="0.75" width="20.4" height="1" fill="#c6c6c6"/></svg>
<svg style="left:47px;top:358px" width="21" height="2"><rect x="0.00" y="0.20" width="20.4" height="1" fill="#c6c6c6"/></svg>
<svg class="x" width="1" height="1"><text x="57.30" y="30.00" font-size="9.6" fill="#4a4a4a" text-anchor="middle">1</text></svg>
<svg class="x" width="1" height="1"><text x="54.85" y="45.85" font-size="10.4" fill="#566a5f" textLength="4.70" lengthAdjust="spacingAndGlyphs">3</text></svg>
<svg class="x" width="1" height="1"><text x="54.85" y="61.30" font-size="10.4" fill="#566a5f" textLength="4.70" lengthAdjust="spacingAndGlyphs">6</text></svg>
<svg class="x" width="1" height="1"><text x="54.85" y="76.75" font-size="10.4" fill="#566a5f" textLength="4.70" lengthAdjust="spacingAndGlyphs">8</text></svg>
<svg class="x" width="1" height="1"><text x="52.35" y="92.20" font-size="10.4" fill="#566a5f" textLength="9.70" lengthAdjust="spacingAndGlyphs">11</text></svg>
<svg class="x" width="1" height="1"><text x="52.35" y="107.65" font-size="10.4" fill="#566a5f" textLength="9.70" lengthAdjust="spacingAndGlyphs">13</text></svg>
<svg class="x" width="1" height="1"><text x="52.35" y="123.10" font-size="10.4" fill="#566a5f" textLength="9.70" lengthAdjust="spacingAndGlyphs">16</text></svg>
<svg class="x" width="1" height="1"><text x="52.35" y="138.55" font-size="10.4" fill="#566a5f" textLength="9.70" lengthAdjust="spacingAndGlyphs">18</text></svg>
<svg class="x" width="1" height="1"><text x="52.35" y="154.00" font-size="10.4" fill="#566a5f" textLength="9.70" lengthAdjust="spacingAndGlyphs">21</text></svg>
<svg class="x" width="1" height="1"><text x="52.35" y="169.45" font-size="10.4" fill="#566a5f" textLength="9.70" lengthAdjust="spacingAndGlyphs">24</text></svg>
<svg class="x" width="1" height="1"><text x="52.35" y="184.90" font-size="10.4" fill="#566a5f" textLength="9.70" lengthAdjust="spacingAndGlyphs">27</text></svg>
<svg class="x" width="1" height="1"><text x="52.35" y="200.35" font-size="10.4" fill="#566a5f" textLength="9.70" lengthAdjust="spacingAndGlyphs">30</text></svg>
<svg class="x" width="1" height="1"><text x="52.35" y="215.80" font-size="10.4" fill="#566a5f" textLength="9.70" lengthAdjust="spacingAndGlyphs">32</text></svg>
<svg class="x" width="1" height="1"><text x="52.35" y="231.25" font-size="10.4" fill="#566a5f" textLength="9.70" lengthAdjust="spacingAndGlyphs">36</text></svg>
<svg class="x" width="1" height="1"><text x="52.35" y="246.70" font-size="10.4" fill="#566a5f" textLength="9.70" lengthAdjust="spacingAndGlyphs">38</text></svg>
<svg class="x" width="1" height="1"><text x="52.35" y="262.15" font-size="10.4" fill="#566a5f" textLength="9.70" lengthAdjust="spacingAndGlyphs">40</text></svg>
<svg class="x" width="1" height="1"><text x="52.35" y="277.60" font-size="10.4" fill="#566a5f" textLength="9.70" lengthAdjust="spacingAndGlyphs">44</text></svg>
<svg class="x" width="1" height="1"><text x="52.35" y="293.05" font-size="10.4" fill="#566a5f" textLength="9.70" lengthAdjust="spacingAndGlyphs">46</text></svg>
<svg class="x" width="1" height="1"><text x="52.35" y="308.50" font-size="10.4" fill="#566a5f" textLength="9.70" lengthAdjust="spacingAndGlyphs">49</text></svg>
<svg class="x" width="1" height="1"><text x="52.35" y="323.95" font-size="10.4" fill="#566a5f" textLength="9.70" lengthAdjust="spacingAndGlyphs">52</text></svg>
<svg class="x" width="1" height="1"><text x="52.35" y="339.40" font-size="10.4" fill="#566a5f" textLength="9.70" lengthAdjust="spacingAndGlyphs">54</text></svg>
<svg class="x" width="1" height="1"><text x="52.35" y="354.85" font-size="10.4" fill="#566a5f" textLength="9.70" lengthAdjust="spacingAndGlyphs">56</text></svg>
<svg class="x" width="1" height="1"><text x="70.80" y="29.90" font-size="10.4" fill="#000" font-weight="700" textLength="9.50" lengthAdjust="spacingAndGlyphs">ID</text></svg>
<svg class="x" width="1" height="1"><text x="133.50" y="29.90" font-size="10.4" fill="#000" font-weight="700" textLength="30.50" lengthAdjust="spacingAndGlyphs">Datum</text></svg>
<svg class="x" width="1" height="1"><text x="270.50" y="29.90" font-size="10.4" fill="#000" font-weight="700" textLength="14.70" lengthAdjust="spacingAndGlyphs">Std</text></svg>
<svg class="x" width="1" height="1"><text x="350.90" y="29.90" font-size="10.4" fill="#000" font-weight="700" textLength="46.10" lengthAdjust="spacingAndGlyphs">Zuständig</text></svg>
<div style="left:120.3px;top:23.1px;width:10.4px;height:10.4px;background:#fcfcfc;border:1px solid #b8b8b8;border-radius:1px;"></div>
<svg style="left:123.4px;top:27.6px;" width="4.2" height="2.6" viewBox="0 0 4.2 2.6"><path d="M0 0H4.2L2.1 2.6Z" fill="#6e6e6e"/></svg>
<div style="left:257.9px;top:23.1px;width:10.4px;height:10.4px;background:#fcfcfc;border:1px solid #b8b8b8;border-radius:1px;"></div>
<svg style="left:261px;top:27.6px;" width="4.2" height="2.6" viewBox="0 0 4.2 2.6"><path d="M0 0H4.2L2.1 2.6Z" fill="#6e6e6e"/></svg>
<div style="left:338.1px;top:23.1px;width:10.4px;height:10.4px;background:#fcfcfc;border:1px solid #b8b8b8;border-radius:1px;"></div>
<svg style="left:341.2px;top:27.6px;" width="4.2" height="2.6" viewBox="0 0 4.2 2.6"><path d="M0 0H4.2L2.1 2.6Z" fill="#6e6e6e"/></svg>
<div style="left:420.1px;top:23.1px;width:10.4px;height:10.4px;background:#fcfcfc;border:1px solid #b8b8b8;border-radius:1px;"></div>
<svg style="left:423.2px;top:27.6px;" width="4.2" height="2.6" viewBox="0 0 4.2 2.6"><path d="M0 0H4.2L2.1 2.6Z" fill="#6e6e6e"/></svg>
<svg class="x" width="1" height="1"><text x="151.70" y="45.65" font-size="10.3" fill="#000" font-weight="700" textLength="52.60" lengthAdjust="spacingAndGlyphs">02.06.2023</text></svg>
<svg class="x" width="1" height="1"><text x="207.70" y="45.65" font-size="10.3" fill="#000" font-weight="700" textLength="39.80" lengthAdjust="spacingAndGlyphs">Ergebnis</text></svg>
<svg class="x" width="1" height="1"><text x="295.60" y="45.75" font-size="10.3" fill="#2a2a2a" textLength="26.40" lengthAdjust="spacingAndGlyphs">04:21</text></svg>
<svg class="x" width="1" height="1"><text x="151.70" y="61.10" font-size="10.3" fill="#000" font-weight="700" textLength="52.60" lengthAdjust="spacingAndGlyphs">03.06.2023</text></svg>
<svg class="x" width="1" height="1"><text x="207.70" y="61.10" font-size="10.3" fill="#000" font-weight="700" textLength="39.80" lengthAdjust="spacingAndGlyphs">Ergebnis</text></svg>
<svg class="x" width="1" height="1"><text x="295.60" y="61.20" font-size="10.3" fill="#2a2a2a" textLength="26.40" lengthAdjust="spacingAndGlyphs">05:33</text></svg>
<svg class="x" width="1" height="1"><text x="151.70" y="76.55" font-size="10.3" fill="#000" font-weight="700" textLength="52.60" lengthAdjust="spacingAndGlyphs">05.06.2023</text></svg>
<svg class="x" width="1" height="1"><text x="207.70" y="76.55" font-size="10.3" fill="#000" font-weight="700" textLength="39.80" lengthAdjust="spacingAndGlyphs">Ergebnis</text></svg>
<svg class="x" width="1" height="1"><text x="295.60" y="76.65" font-size="10.3" fill="#2a2a2a" textLength="26.40" lengthAdjust="spacingAndGlyphs">03:19</text></svg>
<svg class="x" width="1" height="1"><text x="151.70" y="92.00" font-size="10.3" fill="#000" font-weight="700" textLength="52.60" lengthAdjust="spacingAndGlyphs">07.06.2023</text></svg>
<svg class="x" width="1" height="1"><text x="207.70" y="92.00" font-size="10.3" fill="#000" font-weight="700" textLength="39.80" lengthAdjust="spacingAndGlyphs">Ergebnis</text></svg>
<svg class="x" width="1" height="1"><text x="295.60" y="92.10" font-size="10.3" fill="#2a2a2a" textLength="26.40" lengthAdjust="spacingAndGlyphs">06:40</text></svg>
<svg class="x" width="1" height="1"><text x="151.70" y="107.45" font-size="10.3" fill="#000" font-weight="700" textLength="52.60" lengthAdjust="spacingAndGlyphs">09.06.2023</text></svg>
<svg class="x" width="1" height="1"><text x="207.70" y="107.45" font-size="10.3" fill="#000" font-weight="700" textLength="39.80" lengthAdjust="spacingAndGlyphs">Ergebnis</text></svg>
<svg class="x" width="1" height="1"><text x="295.60" y="107.55" font-size="10.3" fill="#2a2a2a" textLength="26.40" lengthAdjust="spacingAndGlyphs">02:30</text></svg>
<svg class="x" width="1" height="1"><text x="151.70" y="122.90" font-size="10.3" fill="#000" font-weight="700" textLength="52.60" lengthAdjust="spacingAndGlyphs">12.06.2023</text></svg>
<svg class="x" width="1" height="1"><text x="207.70" y="122.90" font-size="10.3" fill="#000" font-weight="700" textLength="39.80" lengthAdjust="spacingAndGlyphs">Ergebnis</text></svg>
<svg class="x" width="1" height="1"><text x="295.60" y="123.00" font-size="10.3" fill="#2a2a2a" textLength="26.40" lengthAdjust="spacingAndGlyphs">09:03</text></svg>
<svg class="x" width="1" height="1"><text x="151.70" y="138.35" font-size="10.3" fill="#000" font-weight="700" textLength="52.60" lengthAdjust="spacingAndGlyphs">13.06.2023</text></svg>
<svg class="x" width="1" height="1"><text x="207.70" y="138.35" font-size="10.3" fill="#000" font-weight="700" textLength="39.80" lengthAdjust="spacingAndGlyphs">Ergebnis</text></svg>
<svg class="x" width="1" height="1"><text x="295.60" y="138.45" font-size="10.3" fill="#2a2a2a" textLength="26.40" lengthAdjust="spacingAndGlyphs">01:45</text></svg>
<svg class="x" width="1" height="1"><text x="151.70" y="153.80" font-size="10.3" fill="#000" font-weight="700" textLength="52.60" lengthAdjust="spacingAndGlyphs">14.06.2023</text></svg>
<svg class="x" width="1" height="1"><text x="207.70" y="153.80" font-size="10.3" fill="#000" font-weight="700" textLength="39.80" lengthAdjust="spacingAndGlyphs">Ergebnis</text></svg>
<svg class="x" width="1" height="1"><text x="295.60" y="153.90" font-size="10.3" fill="#2a2a2a" textLength="26.40" lengthAdjust="spacingAndGlyphs">10:17</text></svg>
<svg class="x" width="1" height="1"><text x="151.70" y="169.25" font-size="10.3" fill="#000" font-weight="700" textLength="52.60" lengthAdjust="spacingAndGlyphs">15.06.2023</text></svg>
<svg class="x" width="1" height="1"><text x="207.70" y="169.25" font-size="10.3" fill="#000" font-weight="700" textLength="39.80" lengthAdjust="spacingAndGlyphs">Ergebnis</text></svg>
<svg class="x" width="1" height="1"><text x="295.60" y="169.35" font-size="10.3" fill="#2a2a2a" textLength="26.40" lengthAdjust="spacingAndGlyphs">07:46</text></svg>
<svg class="x" width="1" height="1"><text x="151.70" y="184.70" font-size="10.3" fill="#000" font-weight="700" textLength="52.60" lengthAdjust="spacingAndGlyphs">16.06.2023</text></svg>
<svg class="x" width="1" height="1"><text x="207.70" y="184.70" font-size="10.3" fill="#000" font-weight="700" textLength="39.80" lengthAdjust="spacingAndGlyphs">Ergebnis</text></svg>
<svg class="x" width="1" height="1"><text x="295.60" y="184.80" font-size="10.3" fill="#2a2a2a" textLength="26.40" lengthAdjust="spacingAndGlyphs">07:39</text></svg>
<svg class="x" width="1" height="1"><text x="151.70" y="200.15" font-size="10.3" fill="#000" font-weight="700" textLength="52.60" lengthAdjust="spacingAndGlyphs">17.06.2023</text></svg>
<svg class="x" width="1" height="1"><text x="207.70" y="200.15" font-size="10.3" fill="#000" font-weight="700" textLength="39.80" lengthAdjust="spacingAndGlyphs">Ergebnis</text></svg>
<svg class="x" width="1" height="1"><text x="295.60" y="200.25" font-size="10.3" fill="#2a2a2a" textLength="26.40" lengthAdjust="spacingAndGlyphs">05:34</text></svg>
<svg class="x" width="1" height="1"><text x="151.70" y="215.60" font-size="10.3" fill="#000" font-weight="700" textLength="52.60" lengthAdjust="spacingAndGlyphs">18.06.2023</text></svg>
<svg class="x" width="1" height="1"><text x="207.70" y="215.60" font-size="10.3" fill="#000" font-weight="700" textLength="39.80" lengthAdjust="spacingAndGlyphs">Ergebnis</text></svg>
<svg class="x" width="1" height="1"><text x="295.60" y="215.70" font-size="10.3" fill="#2a2a2a" textLength="26.40" lengthAdjust="spacingAndGlyphs">02:58</text></svg>
<svg class="x" width="1" height="1"><text x="151.70" y="231.05" font-size="10.3" fill="#000" font-weight="700" textLength="52.60" lengthAdjust="spacingAndGlyphs">19.06.2023</text></svg>
<svg class="x" width="1" height="1"><text x="207.70" y="231.05" font-size="10.3" fill="#000" font-weight="700" textLength="39.80" lengthAdjust="spacingAndGlyphs">Ergebnis</text></svg>
<svg class="x" width="1" height="1"><text x="295.60" y="231.15" font-size="10.3" fill="#2a2a2a" textLength="26.40" lengthAdjust="spacingAndGlyphs">11:13</text></svg>
<svg class="x" width="1" height="1"><text x="151.70" y="246.50" font-size="10.3" fill="#000" font-weight="700" textLength="52.60" lengthAdjust="spacingAndGlyphs">20.06.2023</text></svg>
<svg class="x" width="1" height="1"><text x="207.70" y="246.50" font-size="10.3" fill="#000" font-weight="700" textLength="39.80" lengthAdjust="spacingAndGlyphs">Ergebnis</text></svg>
<svg class="x" width="1" height="1"><text x="295.60" y="246.60" font-size="10.3" fill="#2a2a2a" textLength="26.40" lengthAdjust="spacingAndGlyphs">04:02</text></svg>
<svg class="x" width="1" height="1"><text x="151.70" y="261.95" font-size="10.3" fill="#000" font-weight="700" textLength="52.60" lengthAdjust="spacingAndGlyphs">21.06.2023</text></svg>
<svg class="x" width="1" height="1"><text x="207.70" y="261.95" font-size="10.3" fill="#000" font-weight="700" textLength="39.80" lengthAdjust="spacingAndGlyphs">Ergebnis</text></svg>
<svg class="x" width="1" height="1"><text x="295.60" y="262.05" font-size="10.3" fill="#2a2a2a" textLength="26.40" lengthAdjust="spacingAndGlyphs">01:45</text></svg>
<svg class="x" width="1" height="1"><text x="151.70" y="277.40" font-size="10.3" fill="#000" font-weight="700" textLength="52.60" lengthAdjust="spacingAndGlyphs">23.06.2023</text></svg>
<svg class="x" width="1" height="1"><text x="207.70" y="277.40" font-size="10.3" fill="#000" font-weight="700" textLength="39.80" lengthAdjust="spacingAndGlyphs">Ergebnis</text></svg>
<svg class="x" width="1" height="1"><text x="295.60" y="277.50" font-size="10.3" fill="#2a2a2a" textLength="26.40" lengthAdjust="spacingAndGlyphs">13:52</text></svg>
<svg class="x" width="1" height="1"><text x="151.70" y="292.85" font-size="10.3" fill="#000" font-weight="700" textLength="52.60" lengthAdjust="spacingAndGlyphs">24.06.2023</text></svg>
<svg class="x" width="1" height="1"><text x="207.70" y="292.85" font-size="10.3" fill="#000" font-weight="700" textLength="39.80" lengthAdjust="spacingAndGlyphs">Ergebnis</text></svg>
<svg class="x" width="1" height="1"><text x="295.60" y="292.95" font-size="10.3" fill="#2a2a2a" textLength="26.40" lengthAdjust="spacingAndGlyphs">04:11</text></svg>
<svg class="x" width="1" height="1"><text x="151.70" y="308.30" font-size="10.3" fill="#000" font-weight="700" textLength="52.60" lengthAdjust="spacingAndGlyphs">25.06.2023</text></svg>
<svg class="x" width="1" height="1"><text x="207.70" y="308.30" font-size="10.3" fill="#000" font-weight="700" textLength="39.80" lengthAdjust="spacingAndGlyphs">Ergebnis</text></svg>
<svg class="x" width="1" height="1"><text x="295.60" y="308.40" font-size="10.3" fill="#2a2a2a" textLength="26.40" lengthAdjust="spacingAndGlyphs">07:39</text></svg>
<svg class="x" width="1" height="1"><text x="151.70" y="323.75" font-size="10.3" fill="#000" font-weight="700" textLength="52.60" lengthAdjust="spacingAndGlyphs">26.06.2023</text></svg>
<svg class="x" width="1" height="1"><text x="207.70" y="323.75" font-size="10.3" fill="#000" font-weight="700" textLength="39.80" lengthAdjust="spacingAndGlyphs">Ergebnis</text></svg>
<svg class="x" width="1" height="1"><text x="295.60" y="323.85" font-size="10.3" fill="#2a2a2a" textLength="26.40" lengthAdjust="spacingAndGlyphs">05:34</text></svg>
<svg class="x" width="1" height="1"><text x="151.70" y="339.20" font-size="10.3" fill="#000" font-weight="700" textLength="52.60" lengthAdjust="spacingAndGlyphs">27.06.2023</text></svg>
<svg class="x" width="1" height="1"><text x="207.70" y="339.20" font-size="10.3" fill="#000" font-weight="700" textLength="39.80" lengthAdjust="spacingAndGlyphs">Ergebnis</text></svg>
<svg class="x" width="1" height="1"><text x="295.60" y="339.30" font-size="10.3" fill="#2a2a2a" textLength="26.40" lengthAdjust="spacingAndGlyphs">02:58</text></svg>
<svg class="x" width="1" height="1"><text x="151.70" y="354.65" font-size="10.3" fill="#000" font-weight="700" textLength="52.60" lengthAdjust="spacingAndGlyphs">28.06.2023</text></svg>
<svg class="x" width="1" height="1"><text x="207.70" y="354.65" font-size="10.3" fill="#000" font-weight="700" textLength="39.80" lengthAdjust="spacingAndGlyphs">Ergebnis</text></svg>
<svg class="x" width="1" height="1"><text x="295.60" y="354.75" font-size="10.3" fill="#2a2a2a" textLength="26.40" lengthAdjust="spacingAndGlyphs">03:42</text></svg>
<svg style="left:130px;top:33px" width="2" height="323"><rect x="0.10" y="0.45" width="1.2" height="322.35" fill="#26744f"/></svg>
<svg style="left:348px;top:33px" width="2" height="323"><rect x="0.70" y="0.45" width="1.3" height="322.35" fill="#26744f"/></svg>
<svg style="left:130px;top:33px" width="220" height="2"><rect x="0.10" y="0.45" width="219.5" height="1.2" fill="#26744f"/></svg>
<div style="left:2.6px;top:4px;width:14.8px;height:14px;background:#ececec;border:1px solid #b0b0b0;"></div>
<svg class="x" width="1" height="1"><text x="10.00" y="13.90" font-size="6.6" fill="#707070" text-anchor="middle">1</text></svg>
<div style="left:16.4px;top:4px;width:15.2px;height:14px;background:#ececec;border:1px solid #b0b0b0;"></div>
<svg class="x" width="1" height="1"><text x="24.00" y="13.90" font-size="6.6" fill="#707070" text-anchor="middle">2</text></svg>
<div style="left:30.6px;top:4px;width:15.3px;height:14px;background:#ececec;border:1px solid #b0b0b0;"></div>
<svg class="x" width="1" height="1"><text x="38.25" y="13.90" font-size="6.6" fill="#707070" text-anchor="middle">3</text></svg>
<svg style="left:7px;top:35px" width="2" height="337"><rect x="0.30" y="0.65" width="1" height="335.8" fill="#a0a0a0"/></svg>
<svg style="left:7px;top:35px" width="4" height="2"><rect x="0.30" y="0.65" width="3.6" height="1" fill="#a0a0a0"/></svg>
<svg style="left:16px;top:34.25px;" width="15" height="16" viewBox="0 0 15 16"><rect x="0.5" y="0.4" width="13.4" height="13.5" fill="#ececec" stroke="#a0a0a0" stroke-width="0.8"/><path d="M7.3 4.9V10.1M4.7 7.5H9.9" stroke="#444" stroke-width="1.05" fill="none"/></svg>
<svg style="left:16px;top:49.7px;" width="15" height="16" viewBox="0 0 15 16"><rect x="0.5" y="0.4" width="13.4" height="13.5" fill="#ececec" stroke="#a0a0a0" stroke-width="0.8"/><path d="M7.3 4.9V10.1M4.7 7.5H9.9" stroke="#444" stroke-width="1.05" fill="none"/></svg>
<svg style="left:16px;top:65.15px;" width="15" height="16" viewBox="0 0 15 16"><rect x="0.5" y="0.4" width="13.4" height="13.5" fill="#ececec" stroke="#a0a0a0" stroke-width="0.8"/><path d="M7.3 4.9V10.1M4.7 7.5H9.9" stroke="#444" stroke-width="1.05" fill="none"/></svg>
<svg style="left:16px;top:80.6px;" width="15" height="16" viewBox="0 0 15 16"><rect x="0.5" y="0.4" width="13.4" height="13.5" fill="#ececec" stroke="#a0a0a0" stroke-width="0.8"/><path d="M7.3 4.9V10.1M4.7 7.5H9.9" stroke="#444" stroke-width="1.05" fill="none"/></svg>
<svg style="left:16px;top:96.05px;" width="15" height="16" viewBox="0 0 15 16"><rect x="0.5" y="0.4" width="13.4" height="13.5" fill="#ececec" stroke="#a0a0a0" stroke-width="0.8"/><path d="M7.3 4.9V10.1M4.7 7.5H9.9" stroke="#444" stroke-width="1.05" fill="none"/></svg>
<svg style="left:16px;top:111.5px;" width="15" height="16" viewBox="0 0 15 16"><rect x="0.5" y="0.4" width="13.4" height="13.5" fill="#ececec" stroke="#a0a0a0" stroke-width="0.8"/><path d="M7.3 4.9V10.1M4.7 7.5H9.9" stroke="#444" stroke-width="1.05" fill="none"/></svg>
<svg style="left:16px;top:126.95px;" width="15" height="16" viewBox="0 0 15 16"><rect x="0.5" y="0.4" width="13.4" height="13.5" fill="#ececec" stroke="#a0a0a0" stroke-width="0.8"/><path d="M7.3 4.9V10.1M4.7 7.5H9.9" stroke="#444" stroke-width="1.05" fill="none"/></svg>
<svg style="left:16px;top:142.4px;" width="15" height="16" viewBox="0 0 15 16"><rect x="0.5" y="0.4" width="13.4" height="13.5" fill="#ececec" stroke="#a0a0a0" stroke-width="0.8"/><path d="M7.3 4.9V10.1M4.7 7.5H9.9" stroke="#444" stroke-width="1.05" fill="none"/></svg>
<svg style="left:16px;top:157.85px;" width="15" height="16" viewBox="0 0 15 16"><rect x="0.5" y="0.4" width="13.4" height="13.5" fill="#ececec" stroke="#a0a0a0" stroke-width="0.8"/><path d="M7.3 4.9V10.1M4.7 7.5H9.9" stroke="#444" stroke-width="1.05" fill="none"/></svg>
<svg style="left:16px;top:173.3px;" width="15" height="16" viewBox="0 0 15 16"><rect x="0.5" y="0.4" width="13.4" height="13.5" fill="#ececec" stroke="#a0a0a0" stroke-width="0.8"/><path d="M7.3 4.9V10.1M4.7 7.5H9.9" stroke="#444" stroke-width="1.05" fill="none"/></svg>
<svg style="left:16px;top:188.75px;" width="15" height="16" viewBox="0 0 15 16"><rect x="0.5" y="0.4" width="13.4" height="13.5" fill="#ececec" stroke="#a0a0a0" stroke-width="0.8"/><path d="M7.3 4.9V10.1M4.7 7.5H9.9" stroke="#444" stroke-width="1.05" fill="none"/></svg>
<svg style="left:16px;top:204.2px;" width="15" height="16" viewBox="0 0 15 16"><rect x="0.5" y="0.4" width="13.4" height="13.5" fill="#ececec" stroke="#a0a0a0" stroke-width="0.8"/><path d="M7.3 4.9V10.1M4.7 7.5H9.9" stroke="#444" stroke-width="1.05" fill="none"/></svg>
<svg style="left:16px;top:219.65px;" width="15" height="16" viewBox="0 0 15 16"><rect x="0.5" y="0.4" width="13.4" height="13.5" fill="#ececec" stroke="#a0a0a0" stroke-width="0.8"/><path d="M7.3 4.9V10.1M4.7 7.5H9.9" stroke="#444" stroke-width="1.05" fill="none"/></svg>
<svg style="left:16px;top:235.1px;" width="15" height="16" viewBox="0 0 15 16"><rect x="0.5" y="0.4" width="13.4" height="13.5" fill="#ececec" stroke="#a0a0a0" stroke-width="0.8"/><path d="M7.3 4.9V10.1M4.7 7.5H9.9" stroke="#444" stroke-width="1.05" fill="none"/></svg>
<svg style="left:16px;top:250.55px;" width="15" height="16" viewBox="0 0 15 16"><rect x="0.5" y="0.4" width="13.4" height="13.5" fill="#ececec" stroke="#a0a0a0" stroke-width="0.8"/><path d="M7.3 4.9V10.1M4.7 7.5H9.9" stroke="#444" stroke-width="1.05" fill="none"/></svg>
<svg style="left:16px;top:266px;" width="15" height="16" viewBox="0 0 15 16"><rect x="0.5" y="0.4" width="13.4" height="13.5" fill="#ececec" stroke="#a0a0a0" stroke-width="0.8"/><path d="M7.3 4.9V10.1M4.7 7.5H9.9" stroke="#444" stroke-width="1.05" fill="none"/></svg>
<svg style="left:16px;top:281.45px;" width="15" height="16" viewBox="0 0 15 16"><rect x="0.5" y="0.4" width="13.4" height="13.5" fill="#ececec" stroke="#a0a0a0" stroke-width="0.8"/><path d="M7.3 4.9V10.1M4.7 7.5H9.9" stroke="#444" stroke-width="1.05" fill="none"/></svg>
<svg style="left:16px;top:296.9px;" width="15" height="16" viewBox="0 0 15 16"><rect x="0.5" y="0.4" width="13.4" height="13.5" fill="#ececec" stroke="#a0a0a0" stroke-width="0.8"/><path d="M7.3 4.9V10.1M4.7 7.5H9.9" stroke="#444" stroke-width="1.05" fill="none"/></svg>
<svg style="left:16px;top:312.35px;" width="15" height="16" viewBox="0 0 15 16"><rect x="0.5" y="0.4" width="13.4" height="13.5" fill="#ececec" stroke="#a0a0a0" stroke-width="0.8"/><path d="M7.3 4.9V10.1M4.7 7.5H9.9" stroke="#444" stroke-width="1.05" fill="none"/></svg>
<svg style="left:16px;top:327.8px;" width="15" height="16" viewBox="0 0 15 16"><rect x="0.5" y="0.4" width="13.4" height="13.5" fill="#ececec" stroke="#a0a0a0" stroke-width="0.8"/><path d="M7.3 4.9V10.1M4.7 7.5H9.9" stroke="#444" stroke-width="1.05" fill="none"/></svg>
<svg style="left:16px;top:343.25px;" width="15" height="16" viewBox="0 0 15 16"><rect x="0.5" y="0.4" width="13.4" height="13.5" fill="#ececec" stroke="#a0a0a0" stroke-width="0.8"/><path d="M7.3 4.9V10.1M4.7 7.5H9.9" stroke="#444" stroke-width="1.05" fill="none"/></svg>
<svg style="left:630.8px;top:6.6px;" width="5.6" height="4.4" viewBox="0 0 5.6 4.4"><path d="M2.8 0.2L5.5 4.2H0.1Z" fill="#606060"/></svg>
<div style="left:630.7px;top:14px;width:5.9px;height:298.6px;background:#696969;border-radius:3px;"></div>
<svg style="left:630.9px;top:349px;" width="5.6" height="4.2" viewBox="0 0 5.6 4.2"><path d="M0.1 0.2H5.5L2.8 4Z" fill="#606060"/></svg>
</div>
<div style="left:0px;top:481.6px;width:640px;height:19.6px;background:#ebebeb;"></div>
<svg style="left:0px;top:481px" width="640" height="1"><rect x="0.00" y="0.30" width="640" height="0.7" fill="#d9d9d9"/></svg>
<svg style="left:17.3px;top:487.6px;" width="3.6" height="6" viewBox="0 0 3.6 6"><path d="M3.2 0.4L0.6 3L3.2 5.6" fill="none" stroke="#b5b5b5" stroke-width="0.9"/></svg>
<svg style="left:36.6px;top:487.6px;" width="3.6" height="6" viewBox="0 0 3.6 6"><path d="M0.4 0.4L3 3L0.4 5.6" fill="none" stroke="#b5b5b5" stroke-width="0.9"/></svg>
<div style="left:68.6px;top:481.6px;width:41.4px;height:16.2px;background:#fff;border-radius:0 0 3px 3px;"></div>
<svg class="x" width="1" height="1"><text x="74.60" y="492.20" font-size="8.2" fill="#1c1c1c" font-weight="700" stroke="#1c1c1c" stroke-width="0.18" textLength="30.40" lengthAdjust="spacingAndGlyphs">Tabelle1</text></svg>
<svg style="left:74px;top:495px" width="32" height="2"><rect x="0.40" y="0.20" width="30.8" height="1.3" fill="#137c45"/></svg>
<svg class="x" width="1" height="1"><text x="120.00" y="493.80" font-size="8.2" fill="#444" stroke="#444" stroke-width="0.18" textLength="30.60" lengthAdjust="spacingAndGlyphs">Tabelle3</text></svg>
<svg style="left:184px;top:487px;" width="7" height="7" viewBox="0 0 7 7"><path d="M3.5 0.2V6.8M0.2 3.5H6.8" stroke="#444" stroke-width="0.8"/></svg>
<svg style="left:385.6px;top:487.6px;" width="1.4" height="1.4" viewBox="0 0 1.4 1.4"><circle cx="0.7" cy="0.7" r="0.7" fill="#555"/></svg>
<svg style="left:385.6px;top:490.1px;" width="1.4" height="1.4" viewBox="0 0 1.4 1.4"><circle cx="0.7" cy="0.7" r="0.7" fill="#555"/></svg>
<svg style="left:385.6px;top:492.6px;" width="1.4" height="1.4" viewBox="0 0 1.4 1.4"><circle cx="0.7" cy="0.7" r="0.7" fill="#555"/></svg>
<svg style="left:399px;top:488.2px;" width="4" height="5" viewBox="0 0 4 5"><path d="M3.6 0.3V4.7L0.4 2.5Z" fill="#555"/></svg>
<div style="left:406.2px;top:487.3px;width:126.8px;height:5.9px;background:#686868;border-radius:3px;"></div>
<svg style="left:621.8px;top:488px;" width="4" height="5" viewBox="0 0 4 5"><path d="M0.4 0.3V4.7L3.6 2.5Z" fill="#555"/></svg>
<div style="left:0px;top:501.2px;width:640px;height:12.8px;background:#f0f0f0;"></div>
<svg style="left:0px;top:500px" width="640" height="2"><rect x="0.00" y="0.80" width="640" height="0.8" fill="#dedede"/></svg>
<svg class="x" width="1" height="1"><text x="5.60" y="509.30" font-size="6.9" fill="#3d3d3d" stroke="#3d3d3d" stroke-width="0.18" textLength="37.00" lengthAdjust="spacingAndGlyphs">Blatt 1 von 2</text></svg>
<svg class="x" width="1" height="1"><text x="52.00" y="509.30" font-size="6.9" fill="#3d3d3d" stroke="#3d3d3d" stroke-width="0.18" textLength="78.00" lengthAdjust="spacingAndGlyphs">Arbeitsmappenstatistiken</text></svg>
<svg style="left:142.4px;top:503.4px;" width="8" height="7" viewBox="0 0 8 7"><rect x="0.5" y="0.5" width="7" height="6" fill="none" stroke="#444" stroke-width="0.8"/><path d="M0.5 2.2H7.5M2.6 2.2V6.5" stroke="#444" stroke-width="0.6"/><circle cx="5.4" cy="4.6" r="1.3" fill="#444"/></svg>
<svg style="left:161px;top:502.8px;" width="8" height="8.4" viewBox="0 0 8 8.4"><circle cx="4" cy="1.4" r="1" fill="none" stroke="#444" stroke-width="0.7"/><path d="M0.6 3.2H7.4M4 3.2V5.4M4 5.4L2 8M4 5.4L6 8" fill="none" stroke="#444" stroke-width="0.8"/></svg>
<svg class="x" width="1" height="1"><text x="171.20" y="509.30" font-size="6.9" fill="#3d3d3d" stroke="#3d3d3d" stroke-width="0.18" textLength="88.40" lengthAdjust="spacingAndGlyphs">Barrierefreiheit: Untersuchen</text></svg>
<svg class="x" width="1" height="1"><text x="297.60" y="509.30" font-size="6.9" fill="#3d3d3d" stroke="#3d3d3d" stroke-width="0.18" textLength="57.80" lengthAdjust="spacingAndGlyphs">Summe: 05.01.1900</text></svg>
<svg style="left:366.2px;top:503.2px;" width="9" height="8" viewBox="0 0 9 8"><rect x="0.5" y="0.5" width="7.4" height="5" fill="none" stroke="#444" stroke-width="0.8"/><path d="M2.4 7H5" stroke="#444" stroke-width="0.7"/><circle cx="7" cy="6" r="1.8" fill="#f3f3f3" stroke="#444" stroke-width="0.7"/></svg>
<svg class="x" width="1" height="1"><text x="377.00" y="509.30" font-size="6.9" fill="#3d3d3d" stroke="#3d3d3d" stroke-width="0.18" textLength="66.00" lengthAdjust="spacingAndGlyphs">Anzeigeeinstellungen</text></svg>
<div style="left:457px;top:501.6px;width:17.2px;height:12.4px;background:#dcdcdc;"></div>
<svg style="left:462px;top:503.6px;" width="8.4" height="7.4" viewBox="0 0 8.4 7.4"><rect x="0.5" y="0.5" width="7.4" height="6.4" fill="none" stroke="#444" stroke-width="0.8"/><path d="M0.5 2.6H7.9M0.5 4.8H7.9M3 0.5V6.9M5.4 0.5V6.9" stroke="#444" stroke-width="0.6"/></svg>
<svg style="left:486.2px;top:503.6px;" width="8.4" height="7.4" viewBox="0 0 8.4 7.4"><rect x="0.5" y="0.5" width="7.4" height="6.4" fill="none" stroke="#444" stroke-width="0.8"/><rect x="2.6" y="2" width="3.2" height="3.6" fill="none" stroke="#444" stroke-width="0.6"/></svg>
<svg style="left:510.2px;top:503.6px;" width="8.4" height="7.4" viewBox="0 0 8.4 7.4"><rect x="0.5" y="0.5" width="7.4" height="6.4" fill="none" stroke="#444" stroke-width="0.8"/><path d="M0.5 4H4.4V0.5" fill="none" stroke="#444" stroke-width="0.7"/></svg>
<svg style="left:529px;top:507px" width="5" height="1"><rect x="0.60" y="0.20" width="4" height="0.8" fill="#444"/></svg>
<svg style="left:538px;top:507px" width="58" height="1"><rect x="0.60" y="0.30" width="57.4" height="0.7" fill="#8a8a8a"/></svg>
<div style="left:568.6px;top:503.8px;width:2.4px;height:7.6px;background:#444;"></div>
<svg style="left:599.8px;top:505.2px;" width="4.4" height="4.4" viewBox="0 0 4.4 4.4"><path d="M2.2 0.1V4.3M0.1 2.2H4.3" stroke="#444" stroke-width="0.75"/></svg>
<svg class="x" width="1" height="1"><text x="612.80" y="509.30" font-size="6.9" fill="#3d3d3d" stroke="#3d3d3d" stroke-width="0.18" textLength="15.80" lengthAdjust="spacingAndGlyphs">130%</text></svg>
<div style="left:0px;top:20px;width:640px;height:494px;border:1.2px solid rgba(19,124,69,.62);border-top:none;border-right:1px solid rgba(19,124,69,.12);border-radius:0 0 5px 5px;"></div>
</div></body></html>
